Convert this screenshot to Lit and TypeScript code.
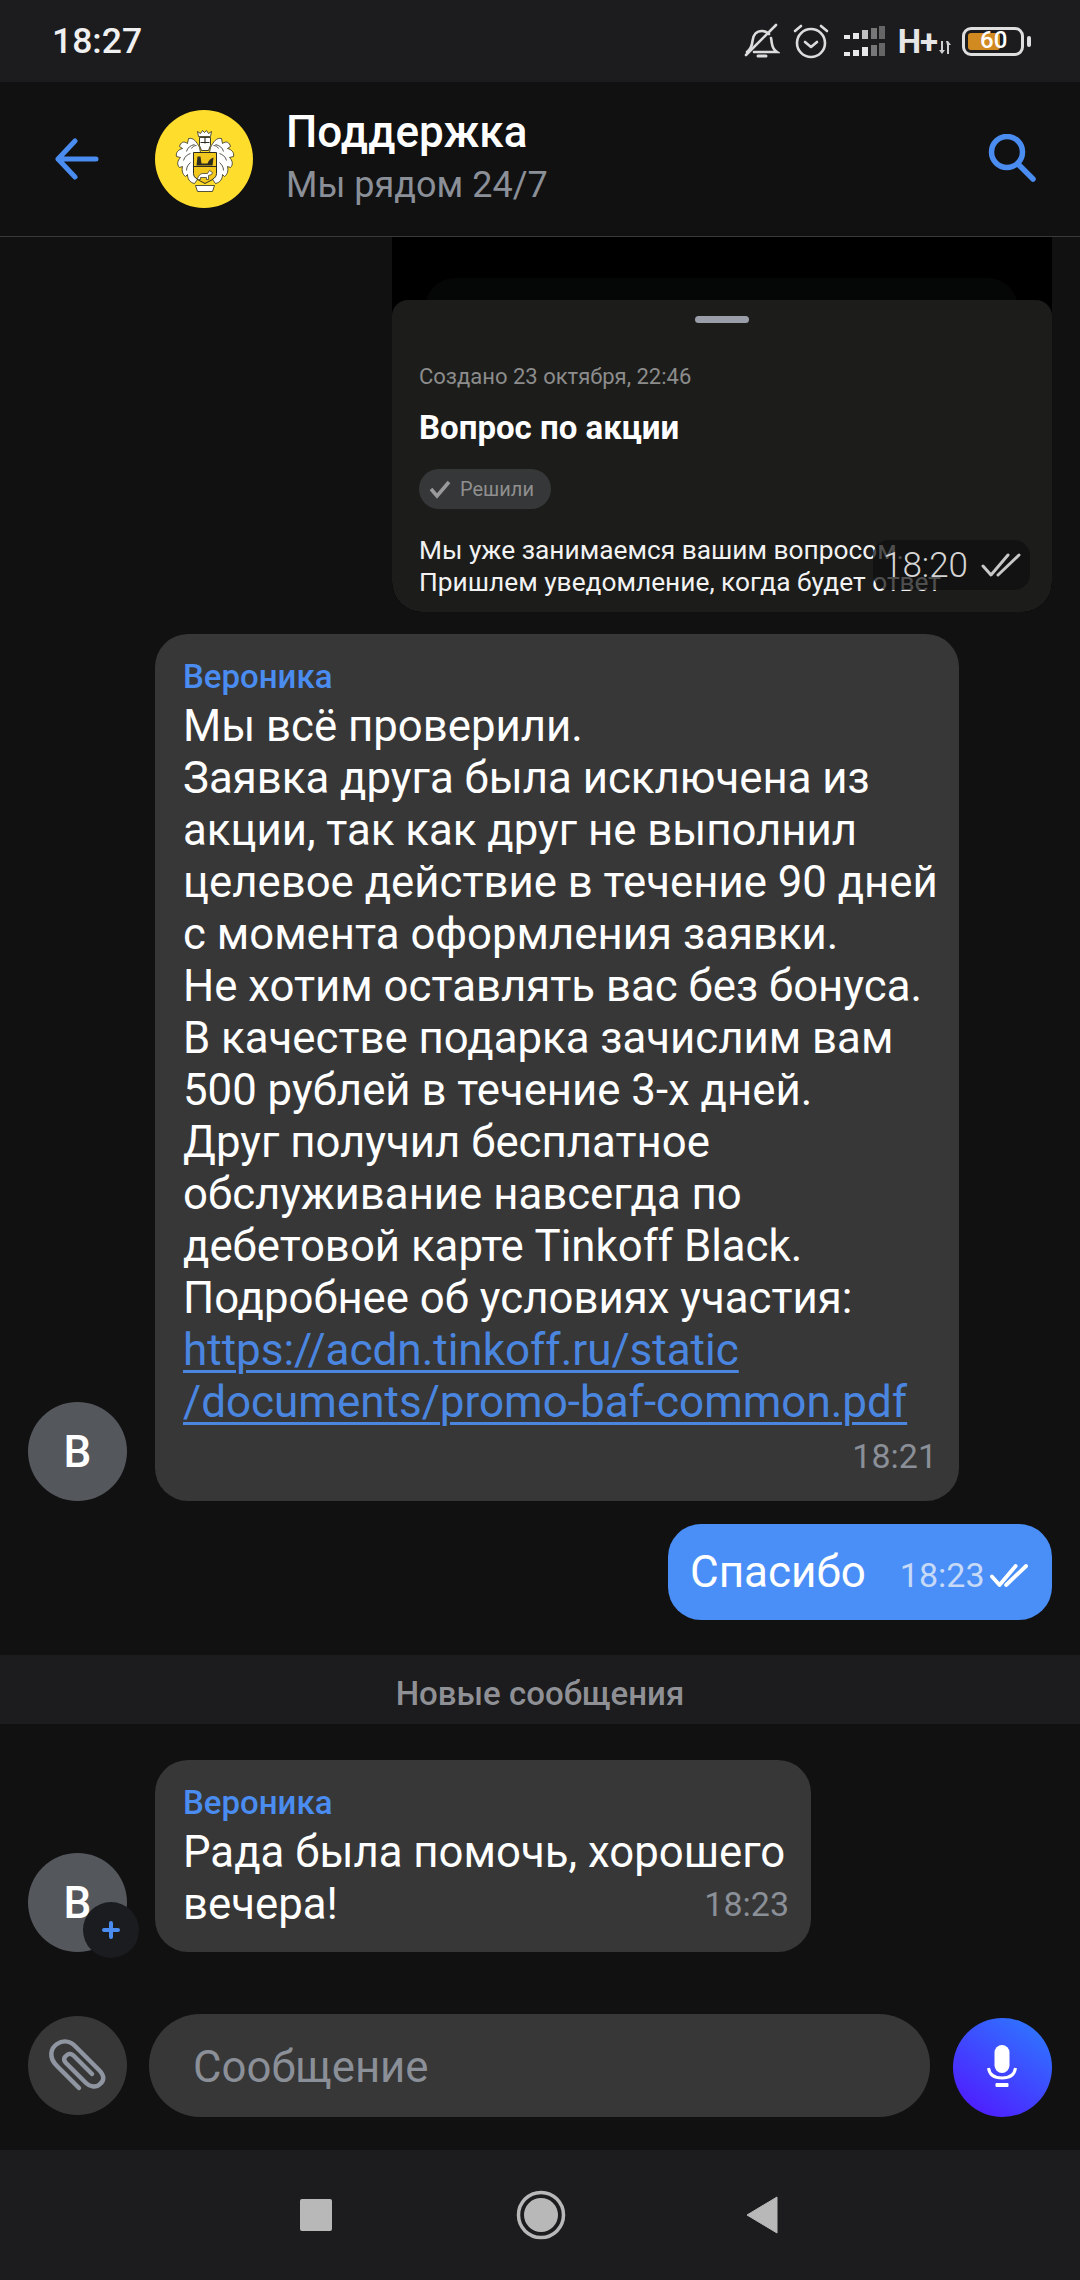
import { LitElement, html, css, svg } from "lit";
import { customElement } from "lit/decorators.js";

const checks = (c: string, w = 36, h = 22, sw = 3) => html`<svg width=${w} height=${h} viewBox="0 0 40 24" fill="none" stroke=${c} stroke-width=${sw} stroke-linecap="round" stroke-linejoin="round"><path d="M2 13l8 9L27 2"/><path d="M17 22L38 2"/></svg>`;

const mantling = svg`
  <path fill="#fff" stroke="#2b2b20" stroke-width=".8" stroke-linejoin="round" d="M29 28C26 22 23 18 18 19l-1 5C13 21 10 23 9 27l3 2C8 30 5 33 6 37l4 1c-3 3-4 7-1 10l3-1c-1 4 0 8 3 10l2-2c0 4 2 8 7 9l3-4-2-2V33h5z"/>
  <path fill="none" stroke="#2b2b20" stroke-width=".8" d="M24 25c-4 1-7 3-8 7M20 34c-3 1-6 3-7 7M20 43c-2 2-4 4-4 8M26 26c-2 0-4 1-5 3"/>`;

@customElement("app-root")
export class AppRoot extends LitElement {
  static styles = css`
    :host { display: block; width: 1080px; height: 2280px; background: #111112; font-family: Roboto, "Noto Sans", sans-serif; color: #fff; overflow: hidden; }
    .page { height: 2280px; display: flex; flex-direction: column; }
    .status { height: 82px; flex: none; background: #1c1c1e; display: flex; align-items: center; padding: 0 49px 0 52px; }
    .clock { font-size: 35.5px; font-weight: 500; color: #f0f0f0; flex: 1; }
    .sicons { display: flex; align-items: center; height: 82px; }
    .sicons svg { display: block; }
    .hplus { font-size: 33px; font-weight: 700; color: #e6e6e6; margin-left: 12px; letter-spacing: -1px; line-height: 1; }
    .arrows { margin-left: 1px; margin-top: 13px; }
    .battery { position: relative; width: 62px; height: 29px; border: 3.5px solid #dedede; border-radius: 9px; box-sizing: border-box; margin-left: 11px; }
    .battery i { position: absolute; left: 3px; top: 3px; bottom: 3px; width: 32px; background: #d08a20; border-radius: 3px; }
    .battery b { position: absolute; left: 15px; top: -4px; font-size: 24px; line-height: 29px; font-weight: 500; color: #fff; }
    .tip { width: 4px; height: 11px; background: #dedede; border-radius: 2px; margin-left: 3px; }
    .alarm { margin-left: 12px; }
    .signal { margin-left: 14px; }
    .header { height: 154px; flex: none; display: flex; align-items: center; border-bottom: 1px solid #3a3a3c; }
    .back { margin-left: 55px; display: block; flex: none; }
    .logo { margin-left: 56px; width: 98px; height: 98px; border-radius: 50%; background: #ffdd2d; flex: none; }
    .logo svg { display: block; }
    .titles { margin-left: 33px; flex: 1; }
    .title { font-size: 44px; font-weight: 500; line-height: 52px; margin-top: -6px; }
    .sub { font-size: 36px; line-height: 44px; color: #8a8f98; margin-top: 5px; }
    .search { margin-right: 43px; display: block; flex: none; }
    .thread { flex: 1; display: flex; flex-direction: column; min-height: 0; }
    .shot { align-self: flex-end; margin-right: 28px; width: 660px; height: 375px; background: #000; border-radius: 0 0 30px 30px; position: relative; overflow: hidden; display: flex; flex-direction: column; justify-content: flex-end; }
    .faint { position: absolute; left: 33px; right: 34px; top: 41px; height: 60px; border-radius: 30px 30px 0 0; background: #050606; }
    .sheet { position: relative; height: 312px; background: #1c1d1b; border-radius: 16px 16px 30px 30px; box-sizing: border-box; padding: 0 27px; }
    .handle { position: absolute; left: 303px; top: 16px; width: 54px; height: 7px; border-radius: 4px; background: #9a9ea8; }
    .created { font-size: 22px; line-height: 26px; color: #8c8c8c; padding-top: 64px; }
    .q { font-size: 33px; font-weight: 700; line-height: 40px; margin-top: 18px; }
    .chip { display: flex; width: fit-content; align-items: center; height: 40px; border-radius: 20px; background: #363738; padding: 0 17px 0 9px; gap: 8px; font-size: 20px; color: #8f8f8f; margin-top: 21px; }
    .chip svg { display: block; }
    .qtext { font-size: 26.3px; line-height: 32px; color: #f2f2f2; margin-top: 25px; white-space: nowrap; }
    .stamp { position: absolute; right: 22px; top: 240px; width: 157px; height: 50px; box-sizing: border-box; border-radius: 16px; background: rgba(14,14,14,.72); display: flex; align-items: center; padding-left: 10px; gap: 13px; font-size: 35px; font-weight: 300; color: #d4d4d4; }
    .row { display: flex; align-items: flex-end; padding-left: 28px; }
    .av { width: 99px; height: 99px; border-radius: 50%; background: #54575c; flex: none; display: flex; align-items: center; justify-content: center; font-size: 44px; font-weight: 500; position: relative; }
    .bubble { margin-left: 28px; background: #373737; border-radius: 33px; box-sizing: border-box; padding: 0 22px 0 28px; font-size: 43.75px; line-height: 52px; }
    .bubble.a { width: 804px; height: 867px; margin-top: 22px; }
    .bubble.b { width: 656px; height: 192px; }
    .name { font-size: 33px; line-height: 40px; color: #4a8cf0; font-weight: 500; padding-top: 23px; margin-bottom: 3px; }
    .lines { white-space: nowrap; }
    .link { font-size: 44px; color: #4a86e0; text-decoration: underline; text-decoration-thickness: 3px; text-underline-offset: 5px; }
    .time { font-size: 34px; line-height: 40px; color: #8a8f98; text-align: right; }
    .bubble.a .time { margin-top: 8px; }
    .last { display: flex; justify-content: space-between; align-items: flex-end; }
    .last .time { line-height: 52px; }
    .mine { align-self: flex-end; margin: 23px 28px 0 0; width: 384px; height: 96px; border-radius: 33px; background: #4a8ff8; display: flex; align-items: center; padding-left: 22px; box-sizing: border-box; font-size: 44px; }
    .mine .t { font-size: 34px; color: #c6d9f7; margin-left: 34px; margin-top: 6px; }
    .mine svg { margin-left: 5px; margin-top: 6px; display: block; }
    .divider { height: 69px; box-sizing: border-box; padding-top: 8px; margin-top: 35px; background: #1c1c1e; flex: none; display: flex; align-items: center; justify-content: center; font-size: 33px; font-weight: 500; color: #8f9095; }
    .plus { position: absolute; left: 55px; bottom: -6px; width: 56px; height: 56px; border-radius: 50%; background: #1b1c1f; display: flex; align-items: center; justify-content: center; }
    .row.second { margin-top: 36px; }
    .composer { margin-top: auto; display: flex; align-items: center; padding: 0 28px; height: 103px; margin-bottom: 33px; flex: none; }
    .round { width: 99px; height: 99px; border-radius: 50%; flex: none; }
    .round svg { display: block; }
    .clip { background: #373737; }
    .field { margin-left: 22px; width: 782px; height: 103px; border-radius: 51px; background: #373737; display: flex; align-items: center; padding-left: 44px; padding-top: 2px; box-sizing: border-box; font-size: 43.75px; color: #8a8f98; }
    .mic { margin-left: 23px; background: linear-gradient(35deg, #4d22ff 15%, #2f74ff 90%); margin-top: 3px; }
    .nav { height: 130px; flex: none; background: #1c1c1e; display: flex; align-items: center; }
    .nav svg { display: block; }
    .n1 { margin-left: 300px; } .n2 { margin-left: 184px; } .n3 { margin-left: 180px; }
  `;

  private statusIcons() {
    return html`<div class="sicons">
      <svg width="36" height="36" viewBox="0 0 36 36" fill="none" stroke="#dcdcdc" stroke-width="2.6" stroke-linecap="round">
        <path d="M3 29c4-3 5-6 5.500-11 .5-6 4-10 9.500-10 3 0 5 1 7 3M27 15c.5 2 .5 4 1 6 .5 3 2 6 5 8 H10"/><path d="M2 32L32 2"/><path d="M14 33h8" stroke-width="3"/>
      </svg>
      <svg class="alarm" width="38" height="38" viewBox="0 0 38 38" fill="none" stroke="#dcdcdc" stroke-width="2.6" stroke-linecap="round" stroke-linejoin="round">
        <circle cx="19" cy="21" r="14"/><path d="M13 20l6 5 6-5"/><path d="M3 9l6-5M35 9l-6-5"/>
      </svg>
      <svg class="signal" width="42" height="32" viewBox="0 0 42 32" fill="#e8e8e8">
        ${[0, 1].map((r) => {
          const y = r ? 31 : 14;
          return svg`
            <rect x="0" y=${y - 4} width="6" height="4"/>
            <rect x="9" y=${y - 6} width="6" height="6"/>
            <rect x="18" y=${y - 9} width="6" height="9" opacity=${r ? 1 : 0.8}/>
            <rect x="27" y=${y - 11} width="6" height="11" fill="#777"/>
            <rect x="35" y=${y - 13} width="6" height="13" fill="#666"/>`;
        })}
      </svg>
      <span class="hplus">H+</span>
      <svg class="arrows" width="13" height="13" viewBox="0 0 13 13" fill="#d0d0d0"><path d="M3 0h2v9h2l-3 4-3-4h2zM8 0h2l3 4h-2v9H9V4z" /></svg>
      <div class="battery"><i></i><b>60</b></div><div class="tip"></div>
    </div>`;
  }

  private crest() {
    return html`<svg width="98" height="98" viewBox="-15.500 -9.500 98 98">
      ${mantling}
      <g transform="matrix(-1 0 0 1 69 0)">${mantling}</g>
      <path fill="#fff" stroke="#2b2b20" stroke-width=".8" d="M28 17l-1-5 3 2 2-3 2 2 2-2 2 3 3-2-1 5z"/>
      <path fill="#fff" stroke="#2b2b20" stroke-width=".9" d="M29 18h11v8l-2 5h-7l-2-5z"/>
      <path fill="none" stroke="#2b2b20" stroke-width="1.100" d="M30 23h9M34.500 18v6"/>
      <path fill="#f2c81e" stroke="#2b2b20" stroke-width="1" d="M23 33h23v21c0 5-6 7-11.500 10C29 61 23 59 23 54z"/>
      <path d="M23 47h23" stroke="#2b2b20" stroke-width="1"/>
      <path fill="#2b2b20" d="M27 37h3l1 7h6c1-3 3-5 6-6l-1 8H26z"/>
      <path fill="#fff" stroke="#2b2b20" stroke-width=".7" d="M27 59c1-3 3-5 5-5h5l2-3 3 2-1 2-3 1v4h-2v-2h-6v2h-2z"/>
      <path fill="#fff" stroke="#2b2b20" stroke-width=".8" d="M25 66h19l-2 6H27z"/>
    </svg>`;
  }

  render() {
    return html`<div class="page">
      <div class="status"><div class="clock">18:27</div>${this.statusIcons()}</div>
      <div class="header">
        <svg class="back" width="44" height="42" viewBox="0 0 44 42" fill="none" stroke="#4a8cf0" stroke-width="5" stroke-linecap="round" stroke-linejoin="round"><path d="M20 3L3 21l17 18M3 21h38"/></svg>
        <div class="logo">${this.crest()}</div>
        <div class="titles"><div class="title">Поддержка</div><div class="sub">Мы рядом 24/7</div></div>
        <svg class="search" width="50" height="50" viewBox="0 0 50 50" fill="none" stroke="#4a8cf0" stroke-width="5.500" stroke-linecap="round"><circle cx="20" cy="18" r="15.500"/><path d="M31 30l15 15"/></svg>
      </div>
      <div class="thread">
        <div class="shot">
          <div class="faint"></div>
          <div class="sheet">
            <div class="handle"></div>
            <div class="created">Создано 23 октября, 22:46</div>
            <div class="q">Вопрос по акции</div>
            <div class="chip"><svg width="24" height="20" viewBox="0 0 24 20" fill="none" stroke="#9a9a9a" stroke-width="3.500"><path d="M3 10l6 7L21 3"/></svg>Решили</div>
            <div class="qtext">Мы уже занимаемся вашим вопросом.<br>Пришлем уведомление, когда будет ответ</div>
            <div class="stamp">18:20 ${checks("#c8c8c8", 40, 24, 3)}</div>
          </div>
        </div>
        <div class="row">
          <div class="av">В</div>
          <div class="bubble a">
            <div class="name">Вероника</div>
            <div class="lines">Мы всё проверили.<br>Заявка друга была исключена из<br>акции, так как друг не выполнил<br>целевое действие в течение 90 дней<br>с момента оформления заявки.<br>Не хотим оставлять вас без бонуса.<br>В качестве подарка зачислим вам<br>500 рублей в течение 3-х дней.<br>Друг получил бесплатное<br>обслуживание навсегда по<br>дебетовой карте Tinkoff Black.<br>Подробнее об условиях участия:<br><span class="link">https://acdn.tinkoff.ru/static</span><br><span class="link">/documents/promo-baf-common.pdf</span></div>
            <div class="time">18:21</div>
          </div>
        </div>
        <div class="mine">Спасибо<span class="t">18:23</span>${checks("#fff", 38, 23, 4)}</div>
        <div class="divider">Новые сообщения</div>
        <div class="row second">
          <div class="av">В<div class="plus"><svg width="20" height="20" viewBox="0 0 20 20" stroke="#4a8cf0" stroke-width="4" stroke-linecap="round"><path d="M10 3v14M3 10h14"/></svg></div></div>
          <div class="bubble b">
            <div class="name">Вероника</div>
            <div class="lines">Рада была помочь, хорошего<div class="last"><span>вечера!</span><span class="time">18:23</span></div></div>
          </div>
        </div>
        <div class="composer">
          <div class="round clip"><svg width="99" height="99" viewBox="8 6 99 99" fill="none" stroke="#8f96a1" stroke-width="4.500" stroke-linecap="round" stroke-linejoin="round"><path d="M59 78L37 56C28 47 31 38 37 34c6-4 13-3 18 2l24 24c6 6 5 11 1 14-4 4-10 3-14-1L46 53c-3-3-2-6 1-8 2-2 5-1 7 1l18 18"/></svg></div>
          <div class="field">Сообщение</div>
          <div class="round mic"><svg width="99" height="99" viewBox="3.500 8 99 99" fill="none"><rect x="45" y="35" width="15" height="28" rx="7.500" fill="#fff"/><path d="M39 58c1 7 6 10 13.500 10S65 65 66 58" stroke="#fff" stroke-width="3"/><rect x="46" y="73" width="13" height="4" rx="1" fill="#fff"/></svg></div>
        </div>
      </div>
      <div class="nav">
        <svg class="n1" width="32" height="32"><rect width="32" height="32" rx="2" fill="#b8b8b8"/></svg>
        <svg class="n2" width="50" height="50" viewBox="0 0 50 50"><circle cx="25" cy="25" r="22.500" fill="none" stroke="#b8b8b8" stroke-width="3.500"/><circle cx="25" cy="25" r="17" fill="#b8b8b8"/></svg>
        <svg class="n3" width="32" height="38" viewBox="0 0 32 38"><path d="M31 1v36L1 19z" fill="#b8b8b8" stroke="#b8b8b8" stroke-linejoin="round"/></svg>
      </div>
    </div>`;
  }
}
